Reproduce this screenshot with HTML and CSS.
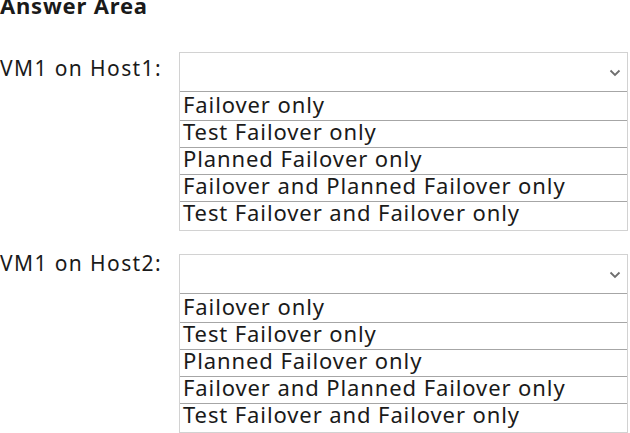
FILE: index.html
```html
<!DOCTYPE html>
<html>
<head>
<meta charset="utf-8">
<link rel="stylesheet" href="styles.css">
</head>
<body>
<div class="page">
  <h1 class="title">Answer Area</h1>
  <div class="item">
    <div class="label">VM1 on Host1:</div>
    <div class="dropdown">
      <div class="select"><svg class="chev" width="12" height="8" viewBox="0 0 12 8"><path d="M1.5 1.5 L6 6 L10.5 1.5" fill="none" stroke="#6e6e6e" stroke-width="1.8"/></svg></div>
      <div class="opt">Failover only</div>
      <div class="opt">Test Failover only</div>
      <div class="opt">Planned Failover only</div>
      <div class="opt">Failover and Planned Failover only</div>
      <div class="opt">Test Failover and Failover only</div>
    </div>
  </div>
  <div class="item">
    <div class="label label-high">VM1 on Host2:</div>
    <div class="dropdown">
      <div class="select"><svg class="chev" width="12" height="8" viewBox="0 0 12 8"><path d="M1.5 1.5 L6 6 L10.5 1.5" fill="none" stroke="#6e6e6e" stroke-width="1.8"/></svg></div>
      <div class="opt">Failover only</div>
      <div class="opt">Test Failover only</div>
      <div class="opt">Planned Failover only</div>
      <div class="opt">Failover and Planned Failover only</div>
      <div class="opt">Test Failover and Failover only</div>
    </div>
  </div>
</div>
</body>
</html>
```

FILE: styles.css
```css
html, body {
  margin: 0;
  padding: 0;
  background: #ffffff;
}
body {
  font-family: "Noto Sans", "Open Sans", sans-serif;
  color: #1a1a1a;
  width: 630px;
  height: 433px;
  overflow: hidden;
}
.page {
  display: flex;
  flex-direction: column;
}
.title {
  font-size: 22px;
  font-weight: 700;
  letter-spacing: 0.8px;
  line-height: 24px;
  margin: -7px 0 0 0;
  height: 59px;
}
.item {
  display: flex;
  align-items: flex-start;
  margin-bottom: 23px;
}
.item:last-child {
  margin-bottom: 0;
}
.label {
  width: 179px;
  font-size: 21px;
  letter-spacing: 1.4px;
  line-height: 32px;
  height: 40px;
  white-space: nowrap;
}
.label-high {
  line-height: 18px;
}
.dropdown {
  width: 447px;
  border: 1px solid #d2d2d2;
  display: flex;
  flex-direction: column;
}
.select {
  height: 39px;
  border-bottom: 1px solid #a6a6a6;
  display: flex;
  align-items: center;
  justify-content: flex-end;
  padding: 2px 6px 0 0;
  box-sizing: border-box;
}
.chev {
  display: block;
}
.opt {
  font-size: 22px;
  letter-spacing: 0.9px;
  height: 26px;
  line-height: 20px;
  padding-left: 3px;
  border-bottom: 1px solid #a6a6a6;
  white-space: nowrap;
  box-sizing: content-box;
}
.select + .opt {
  height: 26px;
  padding-top: 2px;
}
.opt:last-child {
  border-bottom: none;
  height: 28px;
}
```
